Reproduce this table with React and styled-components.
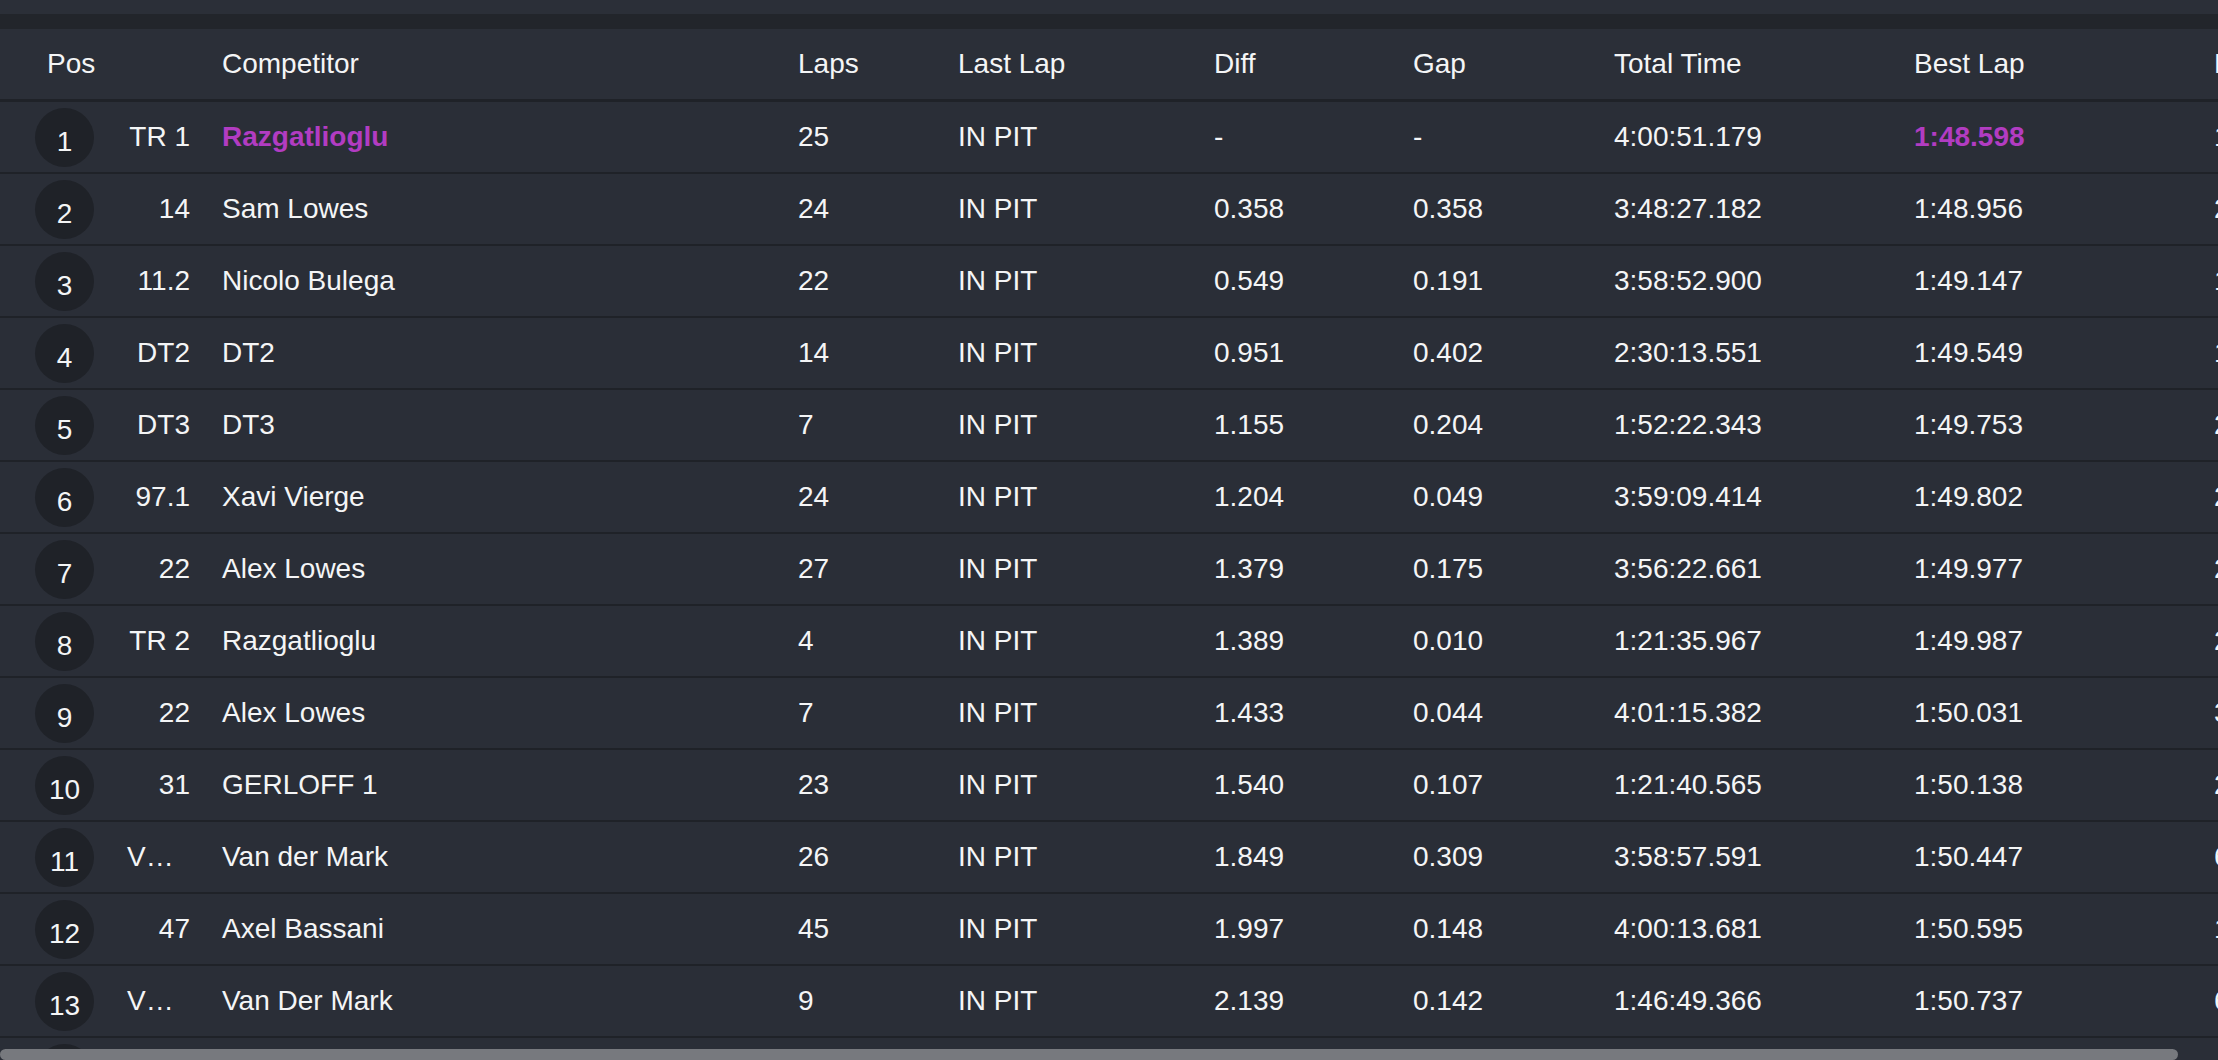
import React from "react";
import styled, { createGlobalStyle } from "styled-components";

const GlobalStyle = createGlobalStyle`
  html, body {
    margin: 0;
    padding: 0;
    background: #2a2e37;
    overflow: hidden;
  }
  * { box-sizing: border-box; }
`;

const COLUMNS = "111px 95px 576px 160px 256px 199px 201px 300px 300px 61px";

const Viewport = styled.div`
  position: relative;
  height: 100vh;
  width: 100vw;
  overflow: hidden;
  background: #2a2e37;
  font-family: "Liberation Sans", Arial, sans-serif;
  color: #f4f5f6;
`;

const Scroller = styled.div`
  height: 100%;
  width: 100%;
  overflow: hidden;
`;

const ScrollThumb = styled.div`
  position: absolute;
  left: 0;
  bottom: 0;
  height: 11px;
  border-radius: 6px;
  background: #77797e;
`;

const Board = styled.div`
  width: 2259px;
  display: flex;
  flex-direction: column;
`;

const TopBar = styled.div`
  height: 14px;
  background: #2b2f38;
`;

const Spacer = styled.div`
  height: 15px;
  background: #22252b;
`;

const HeaderRow = styled.div`
  display: grid;
  grid-template-columns: ${COLUMNS};
  height: 73px;
  align-items: center;
  background: #2b2f38;
  border-bottom: 3px solid #1f2228;
`;

const Row = styled.div`
  display: grid;
  grid-template-columns: ${COLUMNS};
  height: 72px;
  align-items: center;
  background: #2a2e37;
  border-bottom: 2px solid #1f2228;
`;

const HeadCell = styled.div`
  font-size: 28px;
  font-weight: 400;
  padding: 0 16px;
  padding-left: ${(p) => (p.$first ? "47px" : "16px")};
  white-space: nowrap;
  overflow: hidden;
`;

const Cell = styled.div`
  font-size: 28px;
  font-weight: ${(p) => (p.$hl ? 700 : 400)};
  color: ${(p) => (p.$hl ? "#b23cc2" : "#f4f5f6")};
  padding: 0 16px;
  white-space: nowrap;
  overflow: hidden;
  text-overflow: ellipsis;
  text-align: ${(p) => (p.$right ? "right" : "left")};
`;

const PosCell = styled.div`
  padding-left: 35px;
  display: flex;
  align-items: center;
`;

const PosBadge = styled.div`
  width: 59px;
  height: 59px;
  border-radius: 50%;
  background: #1f2228;
  display: flex;
  align-items: center;
  justify-content: center;
  padding-top: 10px;
  font-size: 28px;
  color: #f4f5f6;
`;

const rows = [
  ["TR 1", "Razgatlioglu", "25", "IN PIT", "-", "-", "4:00:51.179", "1:48.598", "17", true],
  ["14", "Sam Lowes", "24", "IN PIT", "0.358", "0.358", "3:48:27.182", "1:48.956", "21"],
  ["11.2", "Nicolo Bulega", "22", "IN PIT", "0.549", "0.191", "3:58:52.900", "1:49.147", "14"],
  ["DT2", "DT2", "14", "IN PIT", "0.951", "0.402", "2:30:13.551", "1:49.549", "11"],
  ["DT3", "DT3", "7", "IN PIT", "1.155", "0.204", "1:52:22.343", "1:49.753", "2"],
  ["97.1", "Xavi Vierge", "24", "IN PIT", "1.204", "0.049", "3:59:09.414", "1:49.802", "23"],
  ["22", "Alex Lowes", "27", "IN PIT", "1.379", "0.175", "3:56:22.661", "1:49.977", "22"],
  ["TR 2", "Razgatlioglu", "4", "IN PIT", "1.389", "0.010", "1:21:35.967", "1:49.987", "2"],
  ["22", "Alex Lowes", "7", "IN PIT", "1.433", "0.044", "4:01:15.382", "1:50.031", "3"],
  ["31", "GERLOFF 1", "23", "IN PIT", "1.540", "0.107", "1:21:40.565", "1:50.138", "21"],
  ["VDM 60", "Van der Mark", "26", "IN PIT", "1.849", "0.309", "3:58:57.591", "1:50.447", "6"],
  ["47", "Axel Bassani", "45", "IN PIT", "1.997", "0.148", "4:00:13.681", "1:50.595", "12"],
  ["VDM 60", "Van Der Mark", "9", "IN PIT", "2.139", "0.142", "1:46:49.366", "1:50.737", "6"],
  ["45", "Scott Redding", "18", "IN PIT", "2.201", "0.062", "2:58:11.204", "1:50.799", "9"],
];

export default function App() {
  return (
    <>
      <GlobalStyle />
      <Viewport>
        <Scroller>
          <Board>
            <TopBar />
            <Spacer />
            <HeaderRow>
              <HeadCell $first>Pos</HeadCell>
              <HeadCell />
              <HeadCell>Competitor</HeadCell>
              <HeadCell>Laps</HeadCell>
              <HeadCell>Last Lap</HeadCell>
              <HeadCell>Diff</HeadCell>
              <HeadCell>Gap</HeadCell>
              <HeadCell>Total Time</HeadCell>
              <HeadCell>Best Lap</HeadCell>
              <HeadCell>Lap</HeadCell>
            </HeaderRow>
            {rows.map((r, i) => (
              <Row key={i}>
                <PosCell>
                  <PosBadge>{i + 1}</PosBadge>
                </PosCell>
                <Cell $right>{r[0]}</Cell>
                <Cell $hl={r[9]}>{r[1]}</Cell>
                <Cell>{r[2]}</Cell>
                <Cell>{r[3]}</Cell>
                <Cell>{r[4]}</Cell>
                <Cell>{r[5]}</Cell>
                <Cell>{r[6]}</Cell>
                <Cell $hl={r[9]}>{r[7]}</Cell>
                <Cell>{r[8]}</Cell>
              </Row>
            ))}
          </Board>
        </Scroller>
        <ScrollThumb style={{ width: "2178px" }} />
      </Viewport>
    </>
  );
}
